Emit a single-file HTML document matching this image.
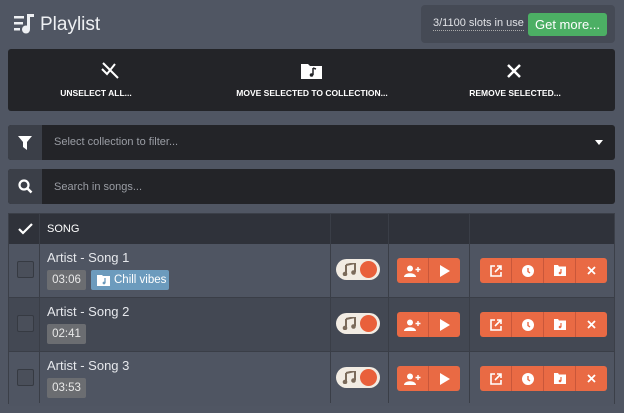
<!DOCTYPE html>
<html><head><style>
*{box-sizing:border-box;margin:0;padding:0}
body{width:624px;height:413px;background:#505663;font-family:"Liberation Sans",sans-serif;color:#e6e8ec;position:relative;overflow:hidden}
.abs{position:absolute}
.title{left:40px;top:14px;font-size:19px;color:#eef0f3}
.slots{left:421px;top:5px;width:194px;height:38px;background:#454a55;border-radius:4px}
.slots span{position:absolute;left:12px;top:12px;font-size:11px;color:#e0e2e6;border-bottom:1px dotted #aaa;line-height:13px}
.gm{position:absolute;left:107px;top:8px;width:79px;height:23px;background:#4caf64;border-radius:3px;color:#fff;font-size:13px;text-align:center;line-height:23px}
.act{left:8px;top:49px;width:607px;height:62px;background:#232428;border-radius:3px}
.act div{position:absolute;top:39px;font-size:8.5px;font-weight:bold;color:#fff;transform:translateX(-50%);white-space:nowrap}
.inp{left:8px;width:607px;height:35px;background:#232428;border-radius:3px}
.inp .ic{position:absolute;left:0;top:0;width:34px;height:35px;background:#3b3f48;border-radius:3px 0 0 3px}
.inp span{position:absolute;left:46px;top:11px;font-size:11px;color:#9a9da4}
.tbl{left:8px;top:213px;width:607px;height:191px;border:1px solid #3b3f48}
.hd{position:absolute;left:0;top:0;width:605px;height:30px;background:#2f323a}
.row{position:absolute;left:0;width:605px;height:54px}
.vl{position:absolute;top:0;width:1px;height:189px;background:#3a3e47}
.cb{position:absolute;left:8px;width:17px;height:17px;border:1px solid #363a42;background:#4a4f5a;border-radius:2px}
.nm{position:absolute;left:38px;font-size:13px;color:#e6e8ec}
.tm{position:absolute;left:38px;width:39px;height:20px;background:#6b6d71;border-radius:2px;font-size:11.5px;text-align:center;line-height:20px;color:#e8e8e8}
.tg{position:absolute;left:328px;width:44px;height:21px;background:#f2ece3;border-radius:11px}
.tg i{position:absolute;right:3px;top:2px;width:17px;height:17px;border-radius:50%;background:#e9603b}
.bg{position:absolute;height:25px;background:#e96a44;border-radius:3px;display:flex}
.bg b{flex:1;border-left:1px solid #c9573a;display:flex;align-items:center;justify-content:center}
.bg b:first-child{border-left:none}
</style></head><body>
<svg class="abs" style="left:14px;top:14px" width="22" height="20" viewBox="0 0 22 20"><g fill="#eef0f3"><rect x="0" y="2" width="10" height="2.5"/><rect x="0" y="8" width="9" height="2.5"/><rect x="0" y="14" width="6" height="2.5"/><rect x="13" y="0" width="3" height="15"/><rect x="13" y="0" width="7" height="3"/><circle cx="12" cy="15.5" r="4"/></g></svg>
<div class="abs title">Playlist</div>
<div class="abs slots"><span>3/1100 slots in use</span><div class="gm">Get more...</div></div>
<div class="abs act">
<svg class="abs" style="left:92px;top:12px" width="20" height="18"><path d="M2 8l5 5L15 3M3 2l15 15" stroke="#fff" stroke-width="2" fill="none"/></svg>
<svg class="abs" style="left:293px;top:13px" width="21" height="17"><path d="M0 2h7l2 2h12v13H0z" fill="#fff"/><path d="M12 6v7M12 6l3 1" stroke="#232428" stroke-width="1.5"/><circle cx="10.5" cy="13" r="1.8" fill="#232428"/></svg>
<svg class="abs" style="left:499px;top:15px" width="14" height="14"><path d="M1 1l12 12M13 1L1 13" stroke="#fff" stroke-width="2.5"/></svg>
<div style="left:88px">UNSELECT ALL...</div>
<div style="left:304px">MOVE SELECTED TO COLLECTION...</div>
<div style="left:507px">REMOVE SELECTED...</div>
</div>
<div class="abs inp" style="top:125px"><div class="ic"><svg style="position:absolute;left:10px;top:11px" width="14" height="14"><path d="M0 0h14L9 6v8L5 11V6z" fill="#fff"/></svg></div><span>Select collection to filter...</span><svg style="position:absolute;left:587px;top:15px" width="8" height="5"><path d="M0 0h8L4 5z" fill="#fff"/></svg></div>
<div class="abs inp" style="top:169px"><div class="ic"><svg style="position:absolute;left:10px;top:10px" width="15" height="15"><circle cx="6" cy="6" r="4.5" stroke="#fff" stroke-width="2.2" fill="none"/><path d="M9.5 9.5l4 4" stroke="#fff" stroke-width="2.5"/></svg></div><span style="top:12px">Search in songs...</span></div>
<div class="abs tbl">
<div class="hd"><svg style="position:absolute;left:9px;top:9px" width="15" height="12"><path d="M1 6l4 4 9-9" stroke="#fff" stroke-width="2.2" fill="none"/></svg><span style="position:absolute;left:38px;top:9px;font-size:11px;color:#fff">SONG</span></div>
<div class="row" style="top:30px;background:#4f5562"></div>
<div class="row" style="top:84px;background:#434853"></div>
<div class="row" style="top:138px;background:#4f5562"></div>
<div class="vl" style="left:30px"></div><div class="vl" style="left:321px"></div><div class="vl" style="left:379px"></div><div class="vl" style="left:460px"></div>
<div class="abs" style="left:0;top:83px;width:605px;height:1px;background:#3a3e47"></div>
<div class="abs" style="left:0;top:137px;width:605px;height:1px;background:#3a3e47"></div>
<div class="cb" style="top:47px"></div><div class="cb" style="top:101px"></div><div class="cb" style="top:155px"></div>
<div class="nm" style="top:36px">Artist - Song 1</div><div class="tm" style="top:56px">03:06</div>
<div style="position:absolute;left:82px;top:56px;width:78px;height:20px;background:#6c9bbd;border-radius:2px;font-size:11.5px;line-height:20px;padding-left:23px;color:#fff;white-space:nowrap"><svg style="position:absolute;left:6px;top:4px" width="13" height="12"><path d="M0 1h5l1 1h7v10H0z" fill="#fff"/><path d="M8 4v5" stroke="#6c9bbd" stroke-width="1.3"/><circle cx="7" cy="9" r="1.4" fill="#6c9bbd"/></svg>Chill vibes</div>
<div class="nm" style="top:90px">Artist - Song 2</div><div class="tm" style="top:110px">02:41</div>
<div class="nm" style="top:144px">Artist - Song 3</div><div class="tm" style="top:164px">03:53</div>
</div>
<div id="rows"></div>
<script>
var h='';[258,312,366].forEach(function(t){
var n='<svg width="14" height="13"><path d="M4 2l9-2v9M4 2v9" stroke="#7b6b5b" stroke-width="2" fill="none"/><circle cx="3" cy="11" r="2.3" fill="#7b6b5b"/><circle cx="11.5" cy="9.5" r="2.3" fill="#7b6b5b"/></svg>';
h+='<div class="tg" style="left:336px;top:'+(t+1)+'px"><span style="position:absolute;left:6px;top:4px">'+n+'</span><i></i></div>';
h+='<div class="bg" style="left:397px;top:'+t+'px;width:63px"><b><svg width="17" height="12"><circle cx="6" cy="3.5" r="3" fill="#fff"/><path d="M0 12c0-5 12-5 12 0z" fill="#fff"/><path d="M14 2v5M11.5 4.5h5" stroke="#fff" stroke-width="1.4"/></svg></b><b><svg width="10" height="12"><path d="M0 0l10 6-10 6z" fill="#fff"/></svg></b></div>';
h+='<div class="bg" style="left:480px;top:'+t+'px;width:127px"><b><svg width="12" height="12"><path d="M5 1H1v10h10V7" stroke="#fff" stroke-width="1.6" fill="none"/><path d="M5 7l6-6M7 1h4v4" stroke="#fff" stroke-width="1.6" fill="none"/></svg></b><b><svg width="12" height="12"><circle cx="6" cy="6" r="6" fill="#fff"/><path d="M6 3v3.5l2 1.5" stroke="#e96a44" stroke-width="1.4" fill="none"/></svg></b><b><svg width="12" height="11"><path d="M0 0h4l1 1.5h7V11H0z" fill="#fff"/><path d="M7 4v4" stroke="#e96a44" stroke-width="1.2"/><circle cx="6" cy="8" r="1.3" fill="#e96a44"/></svg></b><b><svg width="9" height="9"><path d="M1 1l7 7M8 1L1 8" stroke="#fff" stroke-width="1.8"/></svg></b></div>';
});document.getElementById('rows').innerHTML=h;
</script>
</body></html>
